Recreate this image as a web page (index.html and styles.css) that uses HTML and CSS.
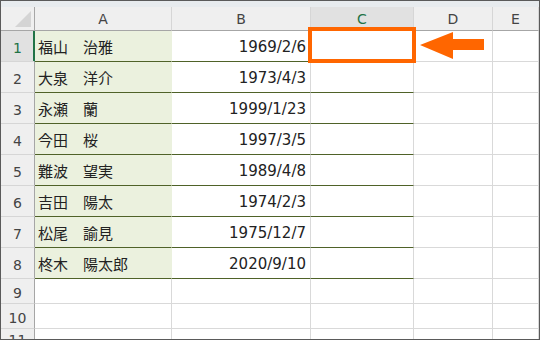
FILE: index.html
```html
<!DOCTYPE html>
<html lang="ja">
<head>
    <meta charset="UTF-8">
    <title>名簿</title>
    <link rel="stylesheet" href="styles.css">
</head>
<body>
    <div class="sheet">
        <div class="strip"></div>

        <!-- column headers -->
        <div class="corner"></div>
        <div class="col-head">A</div>
        <div class="col-head">B</div>
        <div class="col-head active">C</div>
        <div class="col-head">D</div>
        <div class="col-head">E</div>

        <div class="row-head active">1</div>
        <div class="cell name">福山　治雅</div>
        <div class="cell date">1969/2/6</div>
        <div class="cell tbl selected"></div>
        <div class="cell"></div>
        <div class="cell"></div>

        <div class="row-head">2</div>
        <div class="cell name">大泉　洋介</div>
        <div class="cell date">1973/4/3</div>
        <div class="cell tbl"></div>
        <div class="cell"></div>
        <div class="cell"></div>

        <div class="row-head">3</div>
        <div class="cell name">永瀬　蘭</div>
        <div class="cell date">1999/1/23</div>
        <div class="cell tbl"></div>
        <div class="cell"></div>
        <div class="cell"></div>

        <div class="row-head">4</div>
        <div class="cell name">今田　桜</div>
        <div class="cell date">1997/3/5</div>
        <div class="cell tbl"></div>
        <div class="cell"></div>
        <div class="cell"></div>

        <div class="row-head">5</div>
        <div class="cell name">難波　望実</div>
        <div class="cell date">1989/4/8</div>
        <div class="cell tbl"></div>
        <div class="cell"></div>
        <div class="cell"></div>

        <div class="row-head">6</div>
        <div class="cell name">吉田　陽太</div>
        <div class="cell date">1974/2/3</div>
        <div class="cell tbl"></div>
        <div class="cell"></div>
        <div class="cell"></div>

        <div class="row-head">7</div>
        <div class="cell name">松尾　諭見</div>
        <div class="cell date">1975/12/7</div>
        <div class="cell tbl"></div>
        <div class="cell"></div>
        <div class="cell"></div>

        <div class="row-head">8</div>
        <div class="cell name">柊木　陽太郎</div>
        <div class="cell date">2020/9/10</div>
        <div class="cell tbl"></div>
        <div class="cell"></div>
        <div class="cell"></div>

        <div class="row-head">9</div>
        <div class="cell"></div>
        <div class="cell"></div>
        <div class="cell"></div>
        <div class="cell"></div>
        <div class="cell"></div>

        <div class="row-head">10</div>
        <div class="cell"></div>
        <div class="cell"></div>
        <div class="cell"></div>
        <div class="cell"></div>
        <div class="cell"></div>

        <div class="row-head">11</div>
        <div class="cell"></div>
        <div class="cell"></div>
        <div class="cell"></div>
        <div class="cell"></div>
        <div class="cell"></div>

        <!-- pointer to the selected cell -->
        <svg class="arrow" width="66" height="28" viewBox="0 0 66 28">
            <polygon points="0,13 33,0 33,7 64,7 64,18 33,18 33,27" fill="#ff6600"/>
        </svg>
    </div>
</body>
</html>
```

FILE: styles.css
```css
body {
    margin: 0;
    font-family: "Noto Sans CJK JP", sans-serif;
}

.sheet {
    position: relative;
    width: 540px;
    height: 340px;
    box-sizing: border-box;
    border: 1px solid #5a5a5a;
    overflow: hidden;
    display: grid;
    grid-template-columns: 34px 137px 139px 103px 79px 1fr;
    grid-template-rows: 6px 24px repeat(8, 31px) 25px 25px 1fr;
    background: #fff;
    font-size: 15px;
    color: #222;
}

.strip {
    grid-column: 1 / -1;
    background: #e7ebee;
}

/* headers */
.corner,
.col-head,
.row-head {
    background: #efefef;
    color: #444;
    font-family: "DejaVu Sans", sans-serif;
    font-size: 14px;
    box-sizing: border-box;
    display: flex;
    align-items: center;
    justify-content: center;
}

.corner {
    position: relative;
    border-right: 1px solid #a6a6a6;
    border-bottom: 1px solid #a6a6a6;
}

.corner::after {
    content: "";
    position: absolute;
    left: 14px;
    top: 4px;
    width: 16px;
    height: 16px;
    background: #d4d4d4;
    clip-path: polygon(100% 0, 100% 100%, 0 100%);
}

.col-head {
    border-right: 1px solid #d6d6d6;
    border-bottom: 1px solid #a6a6a6;
}

.row-head {
    border-right: 1px solid #a6a6a6;
    border-bottom: 1px solid #d6d6d6;
    padding-top: 3px;
}

.col-head.active,
.row-head.active {
    background: #e1e1e1;
    color: #217346;
}

.row-head.active {
    border-right-color: #217346;
    box-shadow: inset -1px 0 0 #217346;
}

/* cells */
.cell {
    box-sizing: border-box;
    border-right: 1px solid #d9d9d9;
    border-bottom: 1px solid #d9d9d9;
    display: flex;
    align-items: center;
    white-space: nowrap;
}

.name {
    background: #ebf1de;
    border-right-color: #ebf1de;
    border-bottom-color: #4f6228;
    padding-left: 3px;
}

.date {
    font-family: "DejaVu Sans", sans-serif;
    justify-content: flex-end;
    padding-right: 4px;
    padding-top: 1px;
    border-bottom-color: #4f6228;
}

.tbl {
    border-bottom-color: #4f6228;
}

.selected {
    position: relative;
}

.selected::after {
    content: "";
    position: absolute;
    left: -3px;
    top: -4px;
    right: -3px;
    bottom: -2px;
    border: 4px solid #ff6600;
}

.arrow {
    position: absolute;
    left: 419px;
    top: 31px;
}
```
